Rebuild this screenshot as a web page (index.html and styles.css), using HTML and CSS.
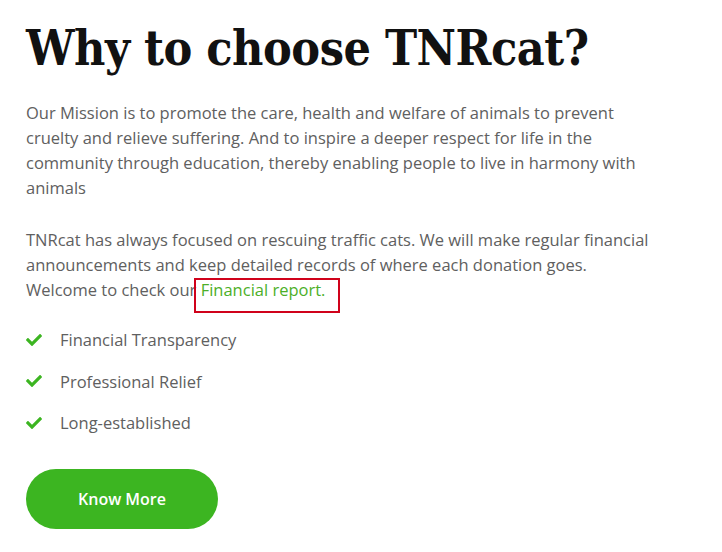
FILE: index.html
```html
<!DOCTYPE html>
<html>
<head>
<meta charset="utf-8">
<link rel="stylesheet" href="styles.css">
</head>
<body>
<section class="why">
  <h1 class="title">Why to choose TNRcat?</h1>
  <p class="text">Our Mission is to promote the care, health and welfare of animals to prevent cruelty and relieve suffering. And to inspire a deeper respect for life in the community through education, thereby enabling people to live in harmony with animals</p>
  <p class="text">TNRcat has always focused on rescuing traffic cats. We will make regular financial announcements and keep detailed records of where each donation goes. Welcome to check our <a class="link" href="#">Financial report.</a></p>
  <ul class="features">
    <li class="feature"><svg class="check" viewBox="0 0 512 512"><path d="M173.898 439.404l-166.4-166.4c-9.997-9.997-9.997-26.206 0-36.204l36.203-36.204c9.997-9.998 26.207-9.998 36.204 0L192 312.69 432.095 72.596c9.997-9.997 26.207-9.997 36.204 0l36.203 36.204c9.997 9.997 9.997 26.206 0 36.204l-294.4 294.401c-9.998 9.997-26.207 9.997-36.204-.001z"/></svg><span>Financial Transparency</span></li>
    <li class="feature"><svg class="check" viewBox="0 0 512 512"><path d="M173.898 439.404l-166.4-166.4c-9.997-9.997-9.997-26.206 0-36.204l36.203-36.204c9.997-9.998 26.207-9.998 36.204 0L192 312.69 432.095 72.596c9.997-9.997 26.207-9.997 36.204 0l36.203 36.204c9.997 9.997 9.997 26.206 0 36.204l-294.4 294.401c-9.998 9.997-26.207 9.997-36.204-.001z"/></svg><span>Professional Relief</span></li>
    <li class="feature"><svg class="check" viewBox="0 0 512 512"><path d="M173.898 439.404l-166.4-166.4c-9.997-9.997-9.997-26.206 0-36.204l36.203-36.204c9.997-9.998 26.207-9.998 36.204 0L192 312.69 432.095 72.596c9.997-9.997 26.207-9.997 36.204 0l36.203 36.204c9.997 9.997 9.997 26.206 0 36.204l-294.4 294.401c-9.998 9.997-26.207 9.997-36.204-.001z"/></svg><span>Long-established</span></li>
  </ul>
  <a class="btn" href="#">Know More</a>
</section>
</body>
</html>
```

FILE: styles.css
```css
html, body {
  margin: 0;
  padding: 0;
  background: #fff;
}
.why {
  padding: 18px 26px 0 26px;
  font-family: "Open Sans", "Liberation Sans", sans-serif;
  color: #606060;
}
.title {
  margin: 0 0 22px 0;
  font-family: "DejaVu Serif Condensed", "Liberation Serif", serif;
  font-weight: bold;
  font-size: 48px;
  line-height: 60px;
  letter-spacing: -0.5px;
  color: #111111;
}
.text {
  margin: 0 0 27px 0;
  font-size: 16.5px;
  line-height: 25px;
  width: 628px;
}
.link {
  position: relative;
  color: #4caf28;
  text-decoration: none;
}
.link::after {
  content: "";
  position: absolute;
  left: -7px;
  top: 0;
  width: 142px;
  height: 31px;
  border: 2px solid #d0021b;
}
.features {
  list-style: none;
  margin: -2px 0 0 0;
  padding: 0;
  display: flex;
  flex-direction: column;
  gap: 16.5px;
}
.feature {
  display: flex;
  align-items: center;
  font-size: 16.5px;
  line-height: 25px;
}
.check {
  width: 16px;
  height: 16px;
  fill: #3cb521;
  margin-right: 18px;
}
.btn {
  display: flex;
  align-items: center;
  justify-content: center;
  margin-top: 34px;
  width: 192px;
  height: 60px;
  border-radius: 30px;
  background: #3cb521;
  color: #ffffff;
  font-weight: 600;
  font-size: 16px;
  text-decoration: none;
}
```
